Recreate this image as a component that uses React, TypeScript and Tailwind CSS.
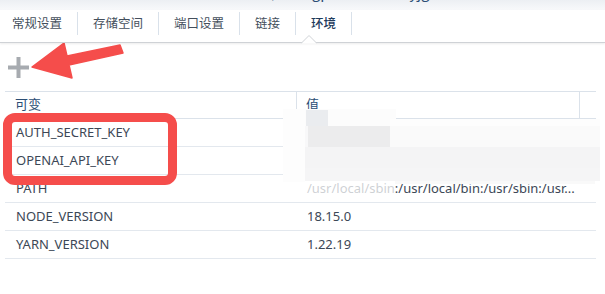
import React from "react";

const tabs = ["常规设置", "存储空间", "端口设置", "链接", "环境"];

const rows = [
  { k: "AUTH_SECRET_KEY", v: "" },
  { k: "OPENAI_API_KEY", v: "" },
  { k: "PATH", v: "/usr/local/sbin:/usr/local/bin:/usr/sbin:/usr..." },
  { k: "NODE_VERSION", v: "18.15.0" },
  { k: "YARN_VERSION", v: "1.22.19" },
];

export default function App() {
  return (
    <div className="relative w-[605px] h-[294px] overflow-hidden bg-white font-['Noto_Sans','Noto_Sans_CJK_SC',sans-serif]">
      {/* top strip (title cut off above) */}
      <div className="relative h-[10px] overflow-hidden bg-gradient-to-b from-[#eceff3] to-[#f8f9fb]">
        <div className="flex items-start h-[16px] -mt-[16px] pl-[174px] gap-[8px] text-[15px] leading-[16px] text-[#2b4d74] font-['Noto_Sans_CJK_SC',sans-serif]">
          <span>容器</span>
          <span className="pl-[60px]">/ chatgpt-next-web-yjg</span>
        </div>
      </div>

      {/* tab bar */}
      <div className="relative h-[33px] bg-white border-b border-[#cfd2d6] shadow-[0_1px_2px_rgba(0,0,0,0.08)] z-10">
        <div className="flex items-start pt-[2px] font-['Noto_Sans_CJK_SC',sans-serif]">
          {tabs.map((t, i) => (
            <div
              key={t}
              className={`relative flex items-center h-[23px] border-r border-[#d9e1ea] text-[12.5px] leading-none ${
                i === 0 ? "pl-[12px] pr-[15px]" : "px-[15px]"
              } ${i === 4 ? "text-[#1f3b5c] font-medium" : "text-[#444f5c]"}`}
            >
              {t}
              {i === 4 && (
                <svg className="absolute left-[5px] top-[23px] w-[16px] h-[9px]" viewBox="0 0 16 9">
                  <polygon points="0,8.5 8,0.5 16,8.5" fill="#ffffff" />
                  <polyline points="0,8.5 8,0.5 16,8.5" fill="none" stroke="#cfd2d6" strokeWidth="1" />
                </svg>
              )}
            </div>
          ))}
        </div>
      </div>

      {/* toolbar */}
      <div className="h-[48px] pl-[8px] pt-[14px]">
        <svg width="21" height="21" viewBox="0 0 21 21">
          <rect x="8.5" y="0" width="4" height="21" fill="#a7abb0" />
          <rect x="0" y="8.5" width="21" height="4" fill="#a7abb0" />
        </svg>
      </div>

      {/* table */}
      <div className="ml-[5px] w-[591px] text-[13px] text-[#3c4756]">
        <div className="flex h-[28px] border-y border-[#dbe2ea] text-[#2b4d74] font-['Noto_Sans_CJK_SC',sans-serif]">
          <div className="w-[292px] border-r border-[#dbe2ea] pl-[10px] pb-[3px] flex items-center">可变</div>
          <div className="w-[283px] border-r border-[#dbe2ea] pl-[9px] pb-[3px] flex items-center">值</div>
          <div className="flex-1" />
        </div>
        {rows.map((r) => (
          <div key={r.k} className="flex h-[28px] border-b border-[#e3e8ee] items-center">
            <div className="w-[292px] pl-[11px]">{r.k}</div>
            <div className="pl-[10px] whitespace-nowrap">{r.v}</div>
          </div>
        ))}
      </div>

      {/* pixelated blur overlay over the secret values */}
      <div className="absolute left-[283px] top-[109px] w-[113px] h-[17px] bg-[#fcfcfc]" />
      <div className="absolute left-[306px] top-[110px] w-[22px] h-[16px] bg-[#eaecef]" />
      <div className="absolute left-[283px] top-[126px] w-[25px] h-[21px] bg-[#f8f8f9]" />
      <div className="absolute left-[308px] top-[126px] w-[82px] h-[21px] bg-[#ececed]" />
      <div className="absolute left-[390px] top-[126px] w-[210px] h-[21px] bg-[#fafafa]" />
      <div className="absolute left-[390px] top-[119px] w-[210px] h-[7px] bg-[#fdfdfd]" />
      <div className="absolute left-[283px] top-[147px] w-[317px] h-[21px] bg-[#f4f4f5]" />
      <div className="absolute left-[283px] top-[168px] w-[317px] h-[13px] bg-[#f5f5f6]" />
      <div className="absolute left-[283px] top-[109px] w-[22px] h-[73px] bg-[#fdfdfd]" />
      <div className="absolute left-[305px] top-[181px] w-[90px] h-[15px] bg-white/75" />
      <div className="absolute left-[395px] top-[181px] w-[200px] h-[3px] bg-[#f9f9f9]" />

      {/* red highlight box */}
      <div className="absolute left-[3px] top-[113px] w-[174px] h-[72px] border-[9px] border-[#f54d4b] rounded-[12px]" />

      {/* red arrow */}
      <svg className="absolute left-0 top-0" width="140" height="100" viewBox="0 0 140 100">
        <polygon
          points="32,67 64,43 67,56 120,45 123,53 69,65 72,78"
          fill="#f54d4b"
          stroke="#f54d4b"
          strokeWidth="1.5"
          strokeLinejoin="round"
        />
      </svg>
    </div>
  );
}
